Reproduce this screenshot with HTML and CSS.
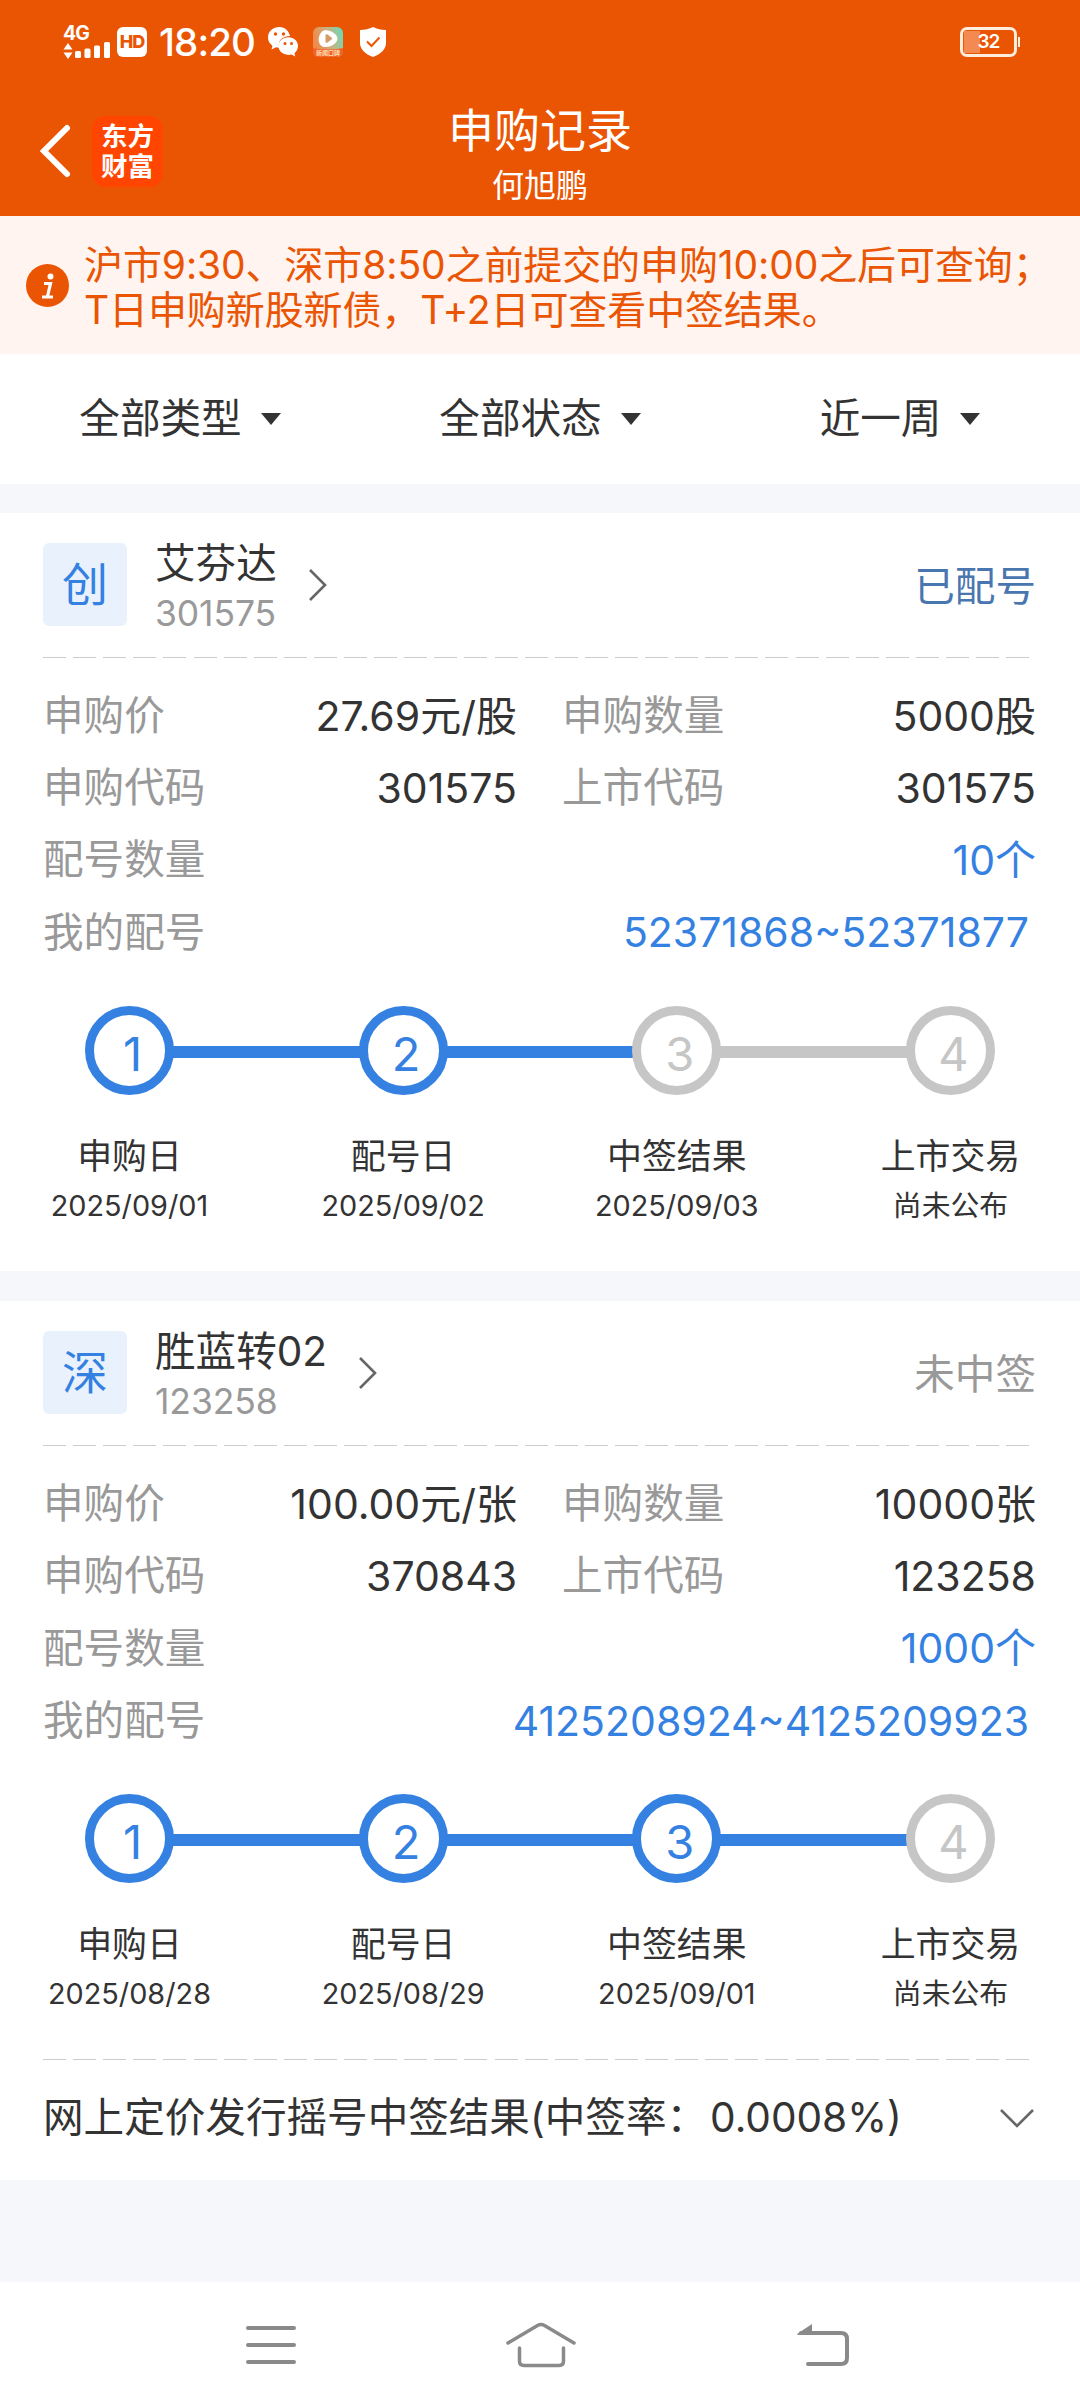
FILE: index.html
```html
<!DOCTYPE html>
<html lang="zh-CN">
  <head>
    <meta charset="UTF-8" />
    <meta name="viewport" content="width=device-width, initial-scale=1.0" />
    <title>申购记录</title>
    <link rel="stylesheet" href="styles.css" />
  </head>
  <body>
    <header class="header">
      <div class="status-bar">
        <div class="signal">
          <span class="net">4G</span>
          <svg width="48" height="16" viewBox="0 0 48 16" fill="#fff">
            <path d="M5 0l4.500 6.500h-9zM5 16l4.500-6.500h-9z" />
            <rect x="12" y="8" width="6" height="7" rx="1.500" />
            <rect x="21.500" y="5.500" width="6" height="9.500" rx="1.500" />
            <rect x="31" y="2.500" width="6" height="12.500" rx="1.500" />
            <rect x="41" y="-1" width="6" height="16" rx="1.500" />
          </svg>
        </div>
        <span class="hd">HD</span>
        <span class="clock">18:20</span>
        <svg class="wechat" width="30" height="30" viewBox="0 0 30 30">
          <path fill="#fff" d="M11.500 0C5 0 0 4.500 0 10.500c0 3.500 1.700 6.200 4.500 8.200L3.500 22.500l4.600-2.200c1 .3 2 .4 3 .4C9.500 14 14 9 22 9 21 4 17 0 11.500 0z" />
          <path fill="#fff" d="M20.300 10.300c-5.600 0-9.800 3.900-9.800 8.800s4.200 8.800 9.800 8.800c1.200 0 2.300-.2 3.300-.5l3.700 2.100-.9-3.300c2.200-1.600 3.600-4.200 3.600-7.100 0-4.900-4.100-8.800-9.700-8.800z" />
          <g fill="#ea5504">
            <circle cx="7.500" cy="7" r="1.700" />
            <circle cx="15.500" cy="7" r="1.700" />
            <circle cx="17" cy="16.500" r="1.500" />
            <circle cx="23.500" cy="16.500" r="1.500" />
          </g>
        </svg>
        <svg class="video" width="30" height="30" viewBox="0 0 30 30">
          <defs>
            <linearGradient id="videoBg" x1="0" y1="0.300" x2="1" y2="0">
              <stop offset="0" stop-color="#f08a4b" />
              <stop offset="0.500" stop-color="#c9b184" />
              <stop offset="1" stop-color="#5fe0bd" />
            </linearGradient>
          </defs>
          <rect width="30" height="30" rx="6" fill="url(#videoBg)" />
          <path d="M0 21q15 3 30 0v3a6 6 0 0 1-6 6H6a6 6 0 0 1-6-6z" fill="#f4602a" />
          <path d="M9 4.500c4-4 16 1.500 15.500 7.500S12 22.500 8 18.500 5.500 8 9 4.500z" fill="#fff" />
          <path d="M12.500 8.500q0-2 2-1l4 3q1.500 1 0 2l-4 3q-2 1-2-1z" fill="#d59a66" />
          <text x="15" y="28" class="video-text">新闻口碑</text>
        </svg>
        <svg class="shield" width="26" height="30" viewBox="0 0 26 30">
          <path fill="#fff" d="M13 0c4 2 8 3 13 3v13c0 6-5 11-13 14C5 27 0 22 0 16V3c5 0 9-1 13-3z" />
          <path fill="none" stroke="#ea5504" stroke-width="2" d="M7 14.500l4.500 4.500 8-8.500" />
        </svg>
        <div class="battery"><div class="battery-level"></div><span>32</span></div>
      </div>
      <div class="title-bar">
        <div class="title-left">
          <svg width="30" height="52" viewBox="0 0 30 52">
            <path d="M27 3L4 26l23 23" fill="none" stroke="#fff" stroke-width="6" stroke-linecap="round" />
          </svg>
          <div class="logo"><span>东方</span><span>财富</span></div>
        </div>
        <div class="title-center">
          <h1>申购记录</h1>
          <p>何旭鹏</p>
        </div>
      </div>
    </header>

    <div class="notice">
      <svg class="info-icon" width="43" height="43" viewBox="0 0 43 43">
        <circle cx="21.500" cy="21.500" r="21.500" fill="#ea5504" />
        <circle cx="24.500" cy="12.500" r="3" fill="#fff" />
        <path d="M18 19.500h6.500l-3 13M16 33h11" fill="none" stroke="#fff" stroke-width="3.200" />
      </svg>
      <p>沪市9:30、深市8:50之前提交的申购10:00之后可查询；<br />T日申购新股新债，T+2日可查看中签结果。</p>
    </div>

    <nav class="filters">
      <div class="filter">全部类型<i class="caret"></i></div>
      <div class="filter">全部状态<i class="caret"></i></div>
      <div class="filter">近一周<i class="caret"></i></div>
    </nav>

    <section class="card">
      <div class="card-head">
        <div class="tag">创</div>
        <div class="stock">
          <h2>艾芬达</h2>
          <span class="code">301575</span>
        </div>
        <svg class="arrow" width="20" height="34" viewBox="0 0 20 34">
          <path d="M2 2l15 15L2 32" fill="none" stroke="#666" stroke-width="2.600" />
        </svg>
        <span class="state state-blue">已配号</span>
      </div>
      <div class="dash"></div>
      <div class="info">
        <div class="row">
          <span class="label">申购价</span><span class="value">27.69元/股</span>
          <span class="label">申购数量</span><span class="value">5000股</span>
        </div>
        <div class="row">
          <span class="label">申购代码</span><span class="value">301575</span>
          <span class="label">上市代码</span><span class="value">301575</span>
        </div>
        <div class="row wide">
          <span class="label">配号数量</span><span class="value blue">10个</span>
        </div>
        <div class="row wide">
          <span class="label">我的配号</span><span class="value blue numbers">52371868~52371877</span>
        </div>
      </div>
      <div class="track">
        <span class="dot on">1</span><i class="line on"></i>
        <span class="dot on">2</span><i class="line on"></i>
        <span class="dot">3</span><i class="line"></i>
        <span class="dot">4</span>
      </div>
      <div class="steps">
        <div class="step"><b>申购日</b><span>2025/09/01</span></div>
        <div class="step"><b>配号日</b><span>2025/09/02</span></div>
        <div class="step"><b>中签结果</b><span>2025/09/03</span></div>
        <div class="step"><b>上市交易</b><span>尚未公布</span></div>
      </div>
    </section>

    <section class="card">
      <div class="card-head">
        <div class="tag">深</div>
        <div class="stock">
          <h2>胜蓝转02</h2>
          <span class="code">123258</span>
        </div>
        <svg class="arrow" width="20" height="34" viewBox="0 0 20 34">
          <path d="M2 2l15 15L2 32" fill="none" stroke="#666" stroke-width="2.600" />
        </svg>
        <span class="state">未中签</span>
      </div>
      <div class="dash"></div>
      <div class="info">
        <div class="row">
          <span class="label">申购价</span><span class="value">100.00元/张</span>
          <span class="label">申购数量</span><span class="value">10000张</span>
        </div>
        <div class="row">
          <span class="label">申购代码</span><span class="value">370843</span>
          <span class="label">上市代码</span><span class="value">123258</span>
        </div>
        <div class="row wide">
          <span class="label">配号数量</span><span class="value blue">1000个</span>
        </div>
        <div class="row wide">
          <span class="label">我的配号</span><span class="value blue numbers">4125208924~4125209923</span>
        </div>
      </div>
      <div class="track">
        <span class="dot on">1</span><i class="line on"></i>
        <span class="dot on">2</span><i class="line on"></i>
        <span class="dot on">3</span><i class="line on"></i>
        <span class="dot">4</span>
      </div>
      <div class="steps">
        <div class="step"><b>申购日</b><span>2025/08/28</span></div>
        <div class="step"><b>配号日</b><span>2025/08/29</span></div>
        <div class="step"><b>中签结果</b><span>2025/09/01</span></div>
        <div class="step"><b>上市交易</b><span>尚未公布</span></div>
      </div>
      <div class="dash"></div>
      <div class="result">
        <span>网上定价发行摇号中签结果(中签率：<span class="rate">0.0008%)</span></span>
        <svg width="36" height="20" viewBox="0 0 36 20">
          <path d="M2 2l16 16L34 2" fill="none" stroke="#666" stroke-width="2.600" />
        </svg>
      </div>
    </section>

    <footer class="nav-bar">
      <svg width="50" height="40" viewBox="0 0 50 40" stroke="#8a8a8a" stroke-width="4" stroke-linecap="round">
        <path d="M2 3h46M2 20h46M2 37h46" />
      </svg>
      <svg class="home" width="70" height="46" viewBox="0 0 70 46" fill="none" stroke="#8a8a8a" stroke-width="3.500" stroke-linecap="round">
        <path d="M2 21L31.500 3.500q3.500-1.800 7 0L68 21" />
        <path d="M13.500 26v13q0 4.500 4.500 4.500h35q4.500 0 4.500-4.500V26" />
      </svg>
      <svg class="back" width="52" height="44" viewBox="0 0 52 44" fill="none" stroke="#8a8a8a" stroke-width="4">
        <path d="M4 10h40q6 0 6 6v19q0 6-6 6H11" stroke-linecap="round" />
        <path d="M0 11L15 1v11H1z" fill="#8a8a8a" stroke="none" />
      </svg>
    </footer>
  </body>
</html>
```
FILE: styles.css
```css
* {
  box-sizing: border-box;
  margin: 0;
  padding: 0;
}
body {
  width: 1080px;
  min-height: 2408px;
  display: flex;
  flex-direction: column;
  background: #f6f7fa;
  color: #333;
  font-family: Inter, "Noto Sans CJK SC", sans-serif;
  font-size: 40.6px;
  line-height: 1.2;
  white-space: nowrap;
}
svg {
  display: block;
  flex: none;
  overflow: visible;
}
h1,
h2,
b {
  font-weight: 400;
}
i {
  font-style: normal;
}

/* 顶部 */
.header {
  height: 216px;
  background: #ea5504;
  color: #fff;
}
.status-bar {
  height: 84px;
  display: flex;
  align-items: center;
  padding: 0 60px 0 63px;
}
.signal {
  width: 48px;
  height: 34px;
}
.net {
  display: block;
  height: 18px;
  font-size: 19.5px;
  line-height: 17px;
  font-weight: 700;
  letter-spacing: -1px;
}
.hd {
  width: 30px;
  height: 30px;
  margin-left: 6px;
  border-radius: 6px;
  background: #fff;
  color: #ea5504;
  font-size: 18px;
  line-height: 30px;
  font-weight: 800;
  letter-spacing: -1px;
  text-align: center;
}
.clock {
  width: 96px;
  margin-left: 12px;
  font-size: 38.5px;
  line-height: 40px;
  font-weight: 500;
  letter-spacing: -0.9px;
}
.wechat {
  margin-left: 13px;
}
.video {
  margin-left: 15px;
}
.video-text {
  fill: #ffe0b0;
  font-size: 6px;
  font-weight: 700;
  text-anchor: middle;
}
.shield {
  margin-left: 17px;
}
.battery {
  position: relative;
  width: 57px;
  height: 30px;
  margin-left: auto;
  margin-right: 3px;
  border: 3px solid #ffeedd;
  border-radius: 7px;
  font-size: 19px;
  line-height: 24px;
  font-weight: 600;
  letter-spacing: -1px;
  text-align: center;
}
.battery::after {
  content: "";
  position: absolute;
  right: -6px;
  top: 7px;
  width: 2px;
  height: 10px;
  background: #ffeedd;
}
.battery-level {
  position: absolute;
  left: 1px;
  top: 1px;
  width: 16px;
  height: 22px;
  background: #f38a52;
}
.battery span {
  position: relative;
}
.title-bar {
  height: 132px;
  display: grid;
  grid-template-columns: 200px 1fr 200px;
}
.title-left {
  display: flex;
  align-items: center;
  height: 132px;
  padding-left: 40px;
  gap: 22px;
  padding-top: 2px;
}
.logo {
  width: 71px;
  height: 71px;
  padding-top: 5px;
  border-radius: 14px;
  background: #ff4500;
  font-size: 26.5px;
  line-height: 30px;
  font-weight: 700;
  text-align: center;
}
.logo span {
  display: block;
}
.title-center {
  padding-top: 14px;
  text-align: center;
}
.title-center h1 {
  font-size: 46px;
  line-height: 64px;
}
.title-center p {
  padding-top: 2px;
  font-size: 32px;
  line-height: 44px;
}

/* 提示 */
.notice {
  height: 138px;
  display: flex;
  padding: 26px 0 0 26px;
  background: #fff4ef;
  color: #ea5504;
}
.info-icon {
  margin-top: 22px;
}
.notice p {
  margin-left: 15px;
  padding-top: 1px;
  font-size: 39px;
  line-height: 44.5px;
  letter-spacing: -0.1px;
}

/* 筛选 */
.filters {
  height: 130px;
  display: grid;
  grid-template-columns: repeat(3, 360px);
  background: #fff;
}
.filter {
  display: flex;
  align-items: center;
  justify-content: center;
  gap: 19px;
}
.caret {
  border: 10px solid transparent;
  border-top: 12px solid #333;
  border-bottom: 0;
}

/* 申购卡片 */
.card {
  margin-top: 29px;
  padding: 0 43px;
  background: #fff;
}
.card + .card {
  margin-top: 30px;
}
.card-head {
  height: 144px;
  display: flex;
  padding-top: 30px;
}
.tag {
  width: 84px;
  height: 83px;
  border-radius: 6px;
  background: #e9f2fc;
  color: #3481e2;
  font-size: 46px;
  line-height: 83px;
  text-align: center;
}
.stock {
  width: auto;
  margin-left: 28px;
}
.stock h2 {
  font-size: 40.6px;
  line-height: 42px;
}
.code {
  display: block;
  margin-top: 8px;
  color: #999;
  font-size: 35.5px;
  line-height: 42px;
  letter-spacing: -0.1px;
}
.arrow {
  margin: 25px 0 0 31px;
}
.state {
  margin-left: auto;
  margin-right: 1px;
  color: #999;
  line-height: 88px;
}
.state-blue {
  color: #4a76b0;
}
.dash {
  width: 986px;
  height: 1px;
  background: repeating-linear-gradient(90deg, #ccc 0, #ccc 23px, transparent 23px, transparent 30.1px);
}
.info {
  padding-top: 22px;
}
.row {
  height: 72.3px;
  display: grid;
  grid-template-columns: 172px 302px 215px 304px;
  align-items: center;
}
.row .value + .label {
  padding-left: 45px;
}
.row.wide {
  grid-template-columns: 172px 821px;
}
.label {
  color: #999;
}
.value {
  text-align: right;
  font-size: 41px;
  letter-spacing: 0;
}
.blue {
  color: #3481e2;
}
.numbers {
  padding-right: 7px;
}

/* 进度 */
.track {
  display: flex;
  align-items: center;
  height: 89px;
  margin-top: 37px;
  padding: 0 42px;
}
.dot {
  flex: none;
  width: 89px;
  height: 89px;
  padding: 4px 0 0 6px;
  border: 9px solid #c6c6c6;
  border-radius: 50%;
  color: #c6c6c6;
  font-size: 47px;
  line-height: 69px;
  text-align: center;
}
.line {
  flex: 1;
  height: 12px;
  margin: 2px -1px 0;
  background: #c6c6c6;
}
.dot.on {
  border-color: #3481e2;
  color: #3481e2;
}
.line.on {
  background: #3481e2;
}
.steps {
  display: flex;
  justify-content: space-between;
  height: 176px;
  padding-top: 37px;
}
.step {
  width: 173px;
  text-align: center;
  font-size: 28.8px;
  line-height: 50px;
}
.step b {
  display: block;
  font-size: 34.9px;
  line-height: 48px;
}
.step span {
  display: block;
  padding-top: 1px;
}
.result {
  height: 120px;
  display: flex;
  align-items: center;
  justify-content: space-between;
  padding-right: 2px;
  padding-bottom: 4px;
}
.rate {
  margin-left: 3px;
}

/* 系统导航 */
.nav-bar {
  height: 126px;
  margin-top: auto;
  display: flex;
  align-items: center;
  padding-left: 246px;
  background: #fff;
}
.home {
  margin-left: 210px;
}
.back {
  margin-left: 221px;
}
```
